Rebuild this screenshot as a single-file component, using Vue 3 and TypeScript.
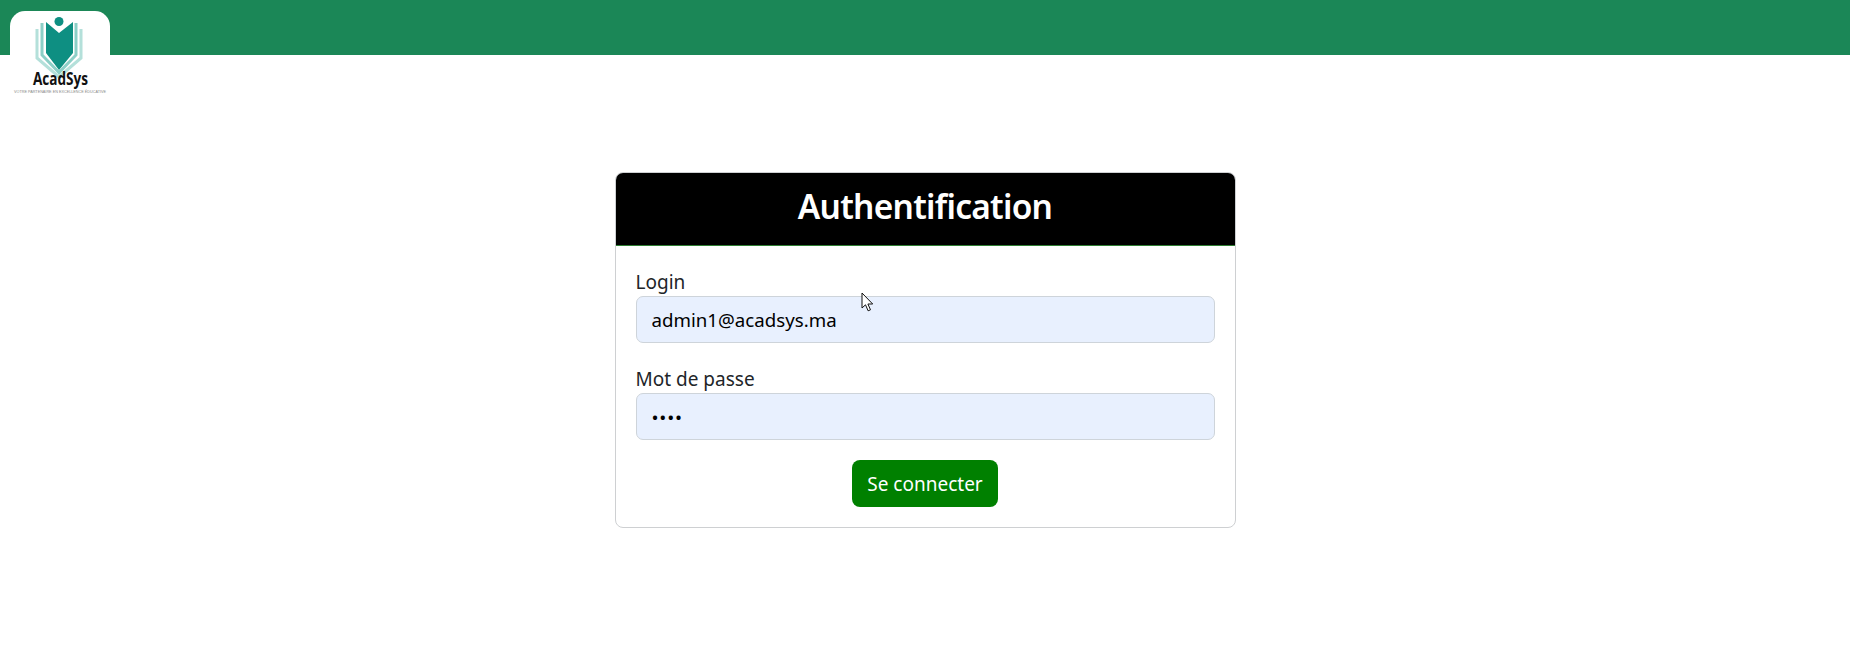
<script setup lang="ts">
import { ref } from 'vue'

const login = ref('admin1@acadsys.ma')
const password = ref('1234')
</script>

<template>
  <div class="page">
    <header class="topbar">
      <div class="logo-tab">
        <svg class="logo" width="100" height="85" viewBox="10 11 100 85">
          <circle cx="59" cy="21.5" r="4.5" fill="#0e8f82" />
          <polyline points="37,29 37,58 59,77 81,58 81,29" fill="none" stroke="#b4e0da" stroke-width="3" />
          <polyline points="42,23 42,55 59,72.5 76,55 76,23" fill="none" stroke="#8ccfc7" stroke-width="3" />
          <polygon points="46,22 59,33 73,22 73,53 59,70 46,53" fill="#0e8f82" />
          <text transform="translate(60.5 85) scale(.8 1)" class="logo-name" text-anchor="middle">AcadSys</text>
          <text x="60" y="92.5" class="logo-tag" text-anchor="middle" textLength="92" lengthAdjust="spacingAndGlyphs">VOTRE PARTENAIRE EN EXCELLENCE ÉDUCATIVE</text>
        </svg>
      </div>
    </header>

    <main class="content">
      <form class="card" @submit.prevent>
        <div class="card-header">
          <h1>Authentification</h1>
        </div>
        <div class="card-body">
          <div class="field">
            <label for="login">Login</label>
            <input id="login" v-model="login" type="text" />
          </div>
          <div class="field">
            <label for="password">Mot de passe</label>
            <input id="password" v-model="password" class="secret" type="password" />
          </div>
          <div class="actions">
            <button type="submit">Se connecter</button>
          </div>
        </div>
      </form>
    </main>

    <svg class="cursor" width="14" height="22" viewBox="0 0 14 22">
      <path d="M1 1v15l3.5-3.2 2.6 6 2.4-1-2.6-5.8h4.8z" fill="#fff" stroke="#111" stroke-width="1" />
    </svg>
  </div>
</template>

<style>
html,
body {
  margin: 0;
  background: #fff;
}
</style>

<style scoped>
.page {
  position: relative;
  height: 657px;
  overflow: hidden;
  font-family: "Noto Sans", "Open Sans", sans-serif;
  color: #212529;
}
.topbar {
  position: relative;
  height: 55px;
  background: #1b8757;
}
.logo-tab {
  position: absolute;
  left: 10px;
  top: 11px;
  width: 100px;
  height: 85px;
  background: #fff;
  border-radius: 15px 15px 0 0;
}
.logo {
  display: block;
  overflow: visible;
}
.logo-name {
  font-family: "Open Sans", sans-serif;
  font-weight: 700;
  font-size: 17px;
  fill: #111;
}
.logo-tag {
  font-family: "Liberation Sans", sans-serif;
  font-size: 4px;
  fill: #888;
}
.content {
  display: flex;
  justify-content: center;
  padding-top: 117px;
}
.card {
  box-sizing: border-box;
  width: 621px;
  height: 356px;
  border: 1px solid #ced0d2;
  border-radius: 8px;
  overflow: hidden;
}
.card-header {
  box-sizing: border-box;
  height: 73px;
  padding-bottom: 6px;
  display: flex;
  align-items: center;
  justify-content: center;
  background: #000;
  border-bottom: 1px solid #2e7d32;
}
.card-header h1 {
  margin: 0;
  font-size: 33.5px;
  font-weight: 600;
  letter-spacing: -0.75px;
  color: #fff;
}
.card-body {
  display: flex;
  flex-direction: column;
  padding: 23px 20px 0;
}
.field {
  display: flex;
  flex-direction: column;
  margin-bottom: 23px;
}
.field label {
  font-size: 19px;
  line-height: 26px;
  height: 27px;
}
.field input {
  box-sizing: border-box;
  height: 47px;
  padding: 0 15px;
  border: 1px solid #ced4da;
  border-radius: 7px;
  background: #e8f0fe;
  font-family: inherit;
  font-size: 18.7px;
  color: #000;
  outline: none;
}
.field input.secret {
  letter-spacing: 0.8px;
}
.actions {
  display: flex;
  justify-content: center;
  margin-top: -3px;
}
.actions button {
  width: 146px;
  height: 47px;
  border: 0;
  border-radius: 8px;
  background: #008000;
  color: #fff;
  font-family: inherit;
  font-size: 19px;
}
.cursor {
  position: absolute;
  left: 861px;
  top: 292px;
}
</style>
